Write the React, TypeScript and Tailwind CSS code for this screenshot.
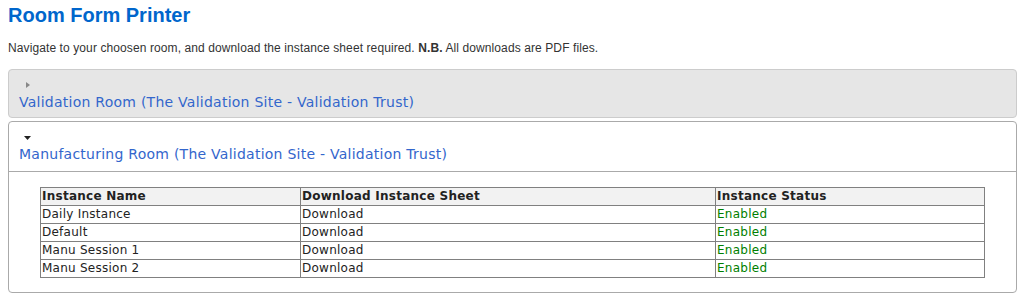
const rows = ["Daily Instance", "Default", "Manu Session 1", "Manu Session 2"];

function RightArrow() {
  return (
    <svg width="16" height="16" viewBox="0 0 16 16" className="block">
      <polygon points="7,5 11,8 7,11" fill="#888888" />
    </svg>
  );
}

function DownArrow() {
  return (
    <svg width="16" height="16" viewBox="0 0 16 16" className="block">
      <polygon points="5,7 12,7 8.5,11" fill="#222222" />
    </svg>
  );
}

export default function App() {
  return (
    <div className="bg-white pl-2 pr-[10px] font-['Liberation_Sans',Arial,sans-serif] text-[#333]">
      <h1 className="mt-[3px] text-[20px] font-bold leading-[24px] text-[#0066cc]">
        Room Form Printer
      </h1>
      <p className="mt-[13px] text-[12px] leading-[16px] tracking-[0.1px]">
        Navigate to your choosen room, and download the instance sheet required.{" "}
        <b>N.B.</b> All downloads are PDF files.
      </p>

      <div className="mt-[13px] font-['DejaVu_Sans',Verdana,sans-serif] tracking-[0.25px]">
        <div className="rounded-[4px] border border-[#cccccc] bg-[#e6e6e6] pt-[7px] pb-[6px] pl-[10px]">
          <RightArrow />
          <div className="text-[14px] leading-[18px] text-[#3366cc]">
            Validation Room (The Validation Site - Validation Trust)
          </div>
        </div>

        <div className="mt-[3px] rounded-[4px] border border-[#aaaaaa] bg-white">
          <div className="border-b border-[#aaaaaa] pt-[7px] pb-[8px] pl-[10px]">
            <DownArrow />
            <div className="text-[14px] leading-[18px] text-[#3366cc]">
              Manufacturing Room (The Validation Site - Validation Trust)
            </div>
          </div>
          <div className="px-[31px] pt-[15px] pb-[14px]">
            <table className="w-full table-fixed border-collapse text-[12px] leading-[17px] text-[#222]">
              <colgroup>
                <col className="w-[260px]" />
                <col className="w-[415px]" />
                <col />
              </colgroup>
              <thead>
                <tr className="bg-[#f2f2f2]">
                  <th className="border border-[#808080] p-0 pl-px text-left font-bold">Instance Name</th>
                  <th className="border border-[#808080] p-0 pl-px text-left font-bold">Download Instance Sheet</th>
                  <th className="border border-[#808080] p-0 pl-px text-left font-bold">Instance Status</th>
                </tr>
              </thead>
              <tbody>
                {rows.map((name) => (
                  <tr key={name}>
                    <td className="border border-[#808080] p-0 pl-px">{name}</td>
                    <td className="border border-[#808080] p-0 pl-px">Download</td>
                    <td className="border border-[#808080] p-0 pl-px text-[#008000]">Enabled</td>
                  </tr>
                ))}
              </tbody>
            </table>
          </div>
        </div>
      </div>
    </div>
  );
}
